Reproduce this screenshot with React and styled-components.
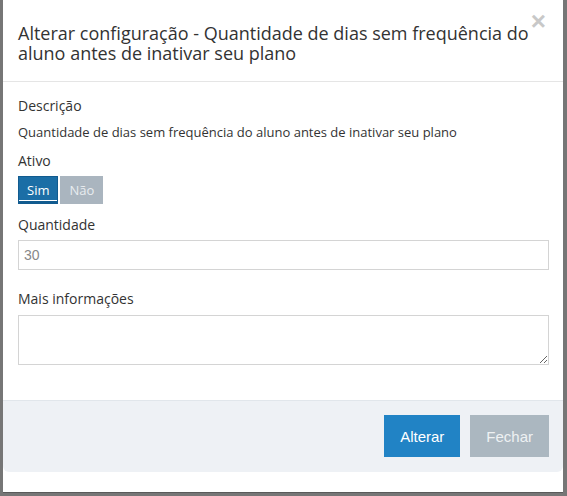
import React, { useState } from 'react';
import styled, { createGlobalStyle } from 'styled-components';

const GlobalStyle = createGlobalStyle`
  html, body {
    margin: 0;
    padding: 0;
    background: #767676;
    font-family: "Open Sans", "Liberation Sans", sans-serif;
    color: #333;
  }
  * { box-sizing: border-box; }
`;

/* Page behind the modal */

const Backdrop = styled.div`
  width: 567px;
  height: 496px;
  overflow: hidden;
  padding: 0 4px 0 3px;
  background: #767676;
`;

/* Modal */

const Modal = styled.div`
  background: #fff;
  height: 493px;
  border-bottom: 1px solid #5a5a5a;
  display: flex;
  flex-direction: column;
`;

const Header = styled.div`
  position: relative;
  padding: 23px 22px 18px 15px;
  border-bottom: 1px solid #e5e5e5;
`;

const Title = styled.h4`
  margin: 0;
  font-size: 18px;
  font-weight: 400;
  line-height: 20px;
  color: #333;
`;

const Close = styled.button`
  position: absolute;
  top: 8px;
  right: 17px;
  padding: 0;
  border: 0;
  background: none;
  font-family: "Liberation Sans", Arial, sans-serif;
  font-size: 26px;
  font-weight: 700;
  line-height: 1;
  color: #c8c8c8;
  cursor: pointer;
`;

const Body = styled.div`
  padding: 14px 14px 35px 15px;
`;

const Label = styled.label`
  display: block;
  font-size: 14px;
  line-height: 20px;
  margin-bottom: ${(p) => p.$mb || 6}px;
`;

const Text = styled.p`
  margin: 0 0 9px;
  font-size: 13px;
  line-height: 20px;
`;

const Toggle = styled.div`
  display: flex;
  gap: 2px;
  margin-bottom: 11px;
`;

const ToggleButton = styled.button`
  height: 28px;
  padding: 0 8px;
  border: 1px solid ${(p) => (p.$active ? '#115b8f' : '#aab5bf')};
  background: ${(p) => (p.$active ? '#1b6ea6' : '#aab5bf')};
  color: ${(p) => (p.$active ? '#fff' : '#e8ecef')};
  font-family: "Open Sans", sans-serif;
  font-size: 13px;
  box-shadow: ${(p) => (p.$active ? 'inset 0 -2px 0 #115b8f, inset 0 -3px 0 #fff' : 'none')};
  cursor: pointer;
`;

const Input = styled.input`
  display: block;
  width: 100%;
  height: 30px;
  padding: 0 5px;
  margin-bottom: 19px;
  border: 1px solid #d4d4d4;
  font-family: "Liberation Sans", Arial, sans-serif;
  font-size: 14px;
  color: #888;
  outline: none;
`;

const TextArea = styled.textarea`
  display: block;
  width: 100%;
  height: 50px;
  border: 1px solid #d4d4d4;
  outline: none;
  resize: vertical;
`;

const Footer = styled.div`
  display: flex;
  justify-content: flex-end;
  gap: 10px;
  padding: 14px 14px 15px;
  background: #eef1f5;
  border-top: 1px solid #e1e6eb;
  border-radius: 0 0 6px 6px;
`;

const Button = styled.button`
  height: 42px;
  padding: 0 ${(p) => p.$pad}px;
  border: 0;
  background: ${(p) => (p.$primary ? '#2183c5' : '#abb7c0')};
  color: ${(p) => (p.$primary ? '#fff' : '#eef1f3')};
  font-family: "Liberation Sans", Arial, sans-serif;
  font-size: 15px;
  cursor: pointer;
`;

function App() {
  const [ativo, setAtivo] = useState(true);

  return (
    <Backdrop>
      <GlobalStyle />
      <Modal>
        <Header>
          <Title>
            Alterar configuração - Quantidade de dias sem frequência do aluno antes de inativar seu plano
          </Title>
          <Close>×</Close>
        </Header>
        <Body>
          <Label>Descrição</Label>
          <Text>Quantidade de dias sem frequência do aluno antes de inativar seu plano</Text>
          <Label $mb={5}>Ativo</Label>
          <Toggle>
            <ToggleButton $active={ativo} onClick={() => setAtivo(true)}>Sim</ToggleButton>
            <ToggleButton $active={!ativo} onClick={() => setAtivo(false)}>Não</ToggleButton>
          </Toggle>
          <Label $mb={5}>Quantidade</Label>
          <Input defaultValue="30" />
          <Label>Mais informações</Label>
          <TextArea />
        </Body>
        <Footer>
          <Button $primary $pad={16}>Alterar</Button>
          <Button $pad={16}>Fechar</Button>
        </Footer>
      </Modal>
    </Backdrop>
  );
}

export default App;
